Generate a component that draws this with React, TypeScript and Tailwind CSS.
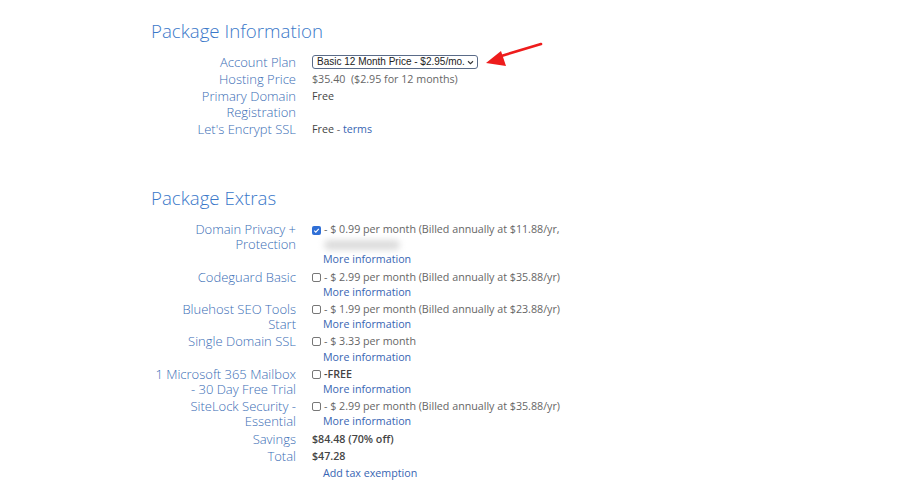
const labelCls =
  "w-[145px] shrink-0 text-right text-[13px] font-light leading-[15.2px] text-[#3a6db5]";
const valueCls = "text-[10.7px] leading-[15.2px] text-[#666]";
const darkCls = "text-[10.7px] leading-[15.2px] text-[#444]";
const linkCls = "text-[10.7px] leading-[15.2px] text-[#3865b3]";

type Extra = {
  label: React.ReactNode;
  text: string;
  checked?: boolean;
  blurred?: boolean;
  bold?: boolean;
};

const extras: Extra[] = [
  {
    label: (
      <>
        Domain Privacy +<br />
        Protection
      </>
    ),
    text: "- $ 0.99 per month (Billed annually at $11.88/yr,",
    checked: true,
    blurred: true,
  },
  { label: "Codeguard Basic", text: "- $ 2.99 per month (Billed annually at $35.88/yr)" },
  {
    label: (
      <>
        Bluehost SEO Tools
        <br />
        Start
      </>
    ),
    text: "- $ 1.99 per month (Billed annually at $23.88/yr)",
  },
  { label: "Single Domain SSL", text: "- $ 3.33 per month" },
  {
    label: (
      <>
        1 Microsoft 365 Mailbox
        <br />- 30 Day Free Trial
      </>
    ),
    text: "-FREE",
    bold: true,
  },
  {
    label: (
      <>
        SiteLock Security -<br />
        Essential
      </>
    ),
    text: "- $ 2.99 per month (Billed annually at $35.88/yr)",
  },
];

function Row({ label, children }: { label: React.ReactNode; children: React.ReactNode }) {
  return (
    <div className="flex gap-4">
      <div className={labelCls}>{label}</div>
      <div className="flex-1 text-[10.7px] leading-[15.2px]">{children}</div>
    </div>
  );
}

function Box({ checked }: { checked?: boolean }) {
  if (checked) {
    return (
      <span className="mr-[3px] inline-flex h-[9px] w-[9px] items-center justify-center rounded-[2px] bg-[#2f6fd6] align-[-1px]">
        <svg viewBox="0 0 10 10" className="h-[7px] w-[7px]">
          <path d="M1.8 5.2 4 7.3 8.3 2.6" fill="none" stroke="#fff" strokeWidth="1.6" />
        </svg>
      </span>
    );
  }
  return (
    <span className="mr-[3px] inline-block h-[9px] w-[9px] rounded-[2px] border border-[#777] bg-white align-[-1px]" />
  );
}

export default function App() {
  return (
    <div
      className="relative min-h-[496px] w-[904px] bg-white pl-[151px] pt-[18px]"
      style={{ fontFamily: '"Open Sans", Arial, sans-serif' }}
    >
      <h2 className="text-[18.7px] font-light leading-[26px] text-[#3a78c9]">Package Information</h2>
      <div className="mt-[11px] flex flex-col gap-[2px]">
        <Row label="Account Plan">
          <div
            className="flex h-[14px] w-[166px] items-center justify-between whitespace-nowrap rounded-[3px] border border-[#5a6b88] pl-[4px] pr-[3px] text-[10px] leading-[12px] text-[#222]"
            style={{ fontFamily: '"Liberation Sans", Arial, sans-serif' }}
          >
            <span>Basic 12 Month Price - $2.95/mo.</span>
            <svg viewBox="0 0 8 6" className="h-[5px] w-[7px] shrink-0">
              <path d="M1 1.5 4 4.5 7 1.5" fill="none" stroke="#333" strokeWidth="1.3" />
            </svg>
          </div>
        </Row>
        <Row label="Hosting Price">
          <span className={valueCls}>$35.40&nbsp; ($2.95 for 12 months)</span>
        </Row>
        <Row
          label={
            <>
              Primary Domain
              <br />
              Registration
            </>
          }
        >
          <span className={darkCls}>Free</span>
        </Row>
        <Row label="Let's Encrypt SSL">
          <span className={darkCls}>Free</span>
          <span className={valueCls}> - </span>
          <span className={linkCls}>terms</span>
        </Row>
      </div>

      <h2 className="mt-[48px] text-[18.7px] font-light leading-[26px] text-[#3a78c9]">Package Extras</h2>
      <div className="mt-[11px] flex flex-col gap-[2px]">
        {extras.map((e, i) => (
          <Row key={i} label={e.label}>
            <div className={valueCls}>
              <Box checked={e.checked} />
              <span className={e.bold ? "font-semibold text-[#444]" : ""}>{e.text}</span>
            </div>
            {e.blurred && (
              <div className="flex h-[15.2px] items-center pl-[12px]">
                <div className="h-[10px] w-[76px] rounded-full bg-[#dcdcdc] blur-[3px]" />
              </div>
            )}
            <div className={`${linkCls} pl-[11px]`}>More information</div>
          </Row>
        ))}
        <Row label="Savings">
          <span className={`${darkCls} font-semibold`}>$84.48 (70% off)</span>
        </Row>
        <Row label="Total">
          <span className={`${darkCls} font-semibold`}>$47.28</span>
        </Row>
        <Row label="">
          <span className={`${linkCls} pl-[11px]`}>Add tax exemption</span>
        </Row>
      </div>

      <svg
        className="absolute left-[484px] top-[40px]"
        width="60"
        height="34"
        viewBox="0 0 60 34"
      >
        <line x1="14" y1="17" x2="57" y2="4" stroke="#ee1c1c" strokeWidth="2.6" strokeLinecap="round" />
        <polygon points="2,23 17,11 22,26" fill="#ee1c1c" />
      </svg>
    </div>
  );
}
